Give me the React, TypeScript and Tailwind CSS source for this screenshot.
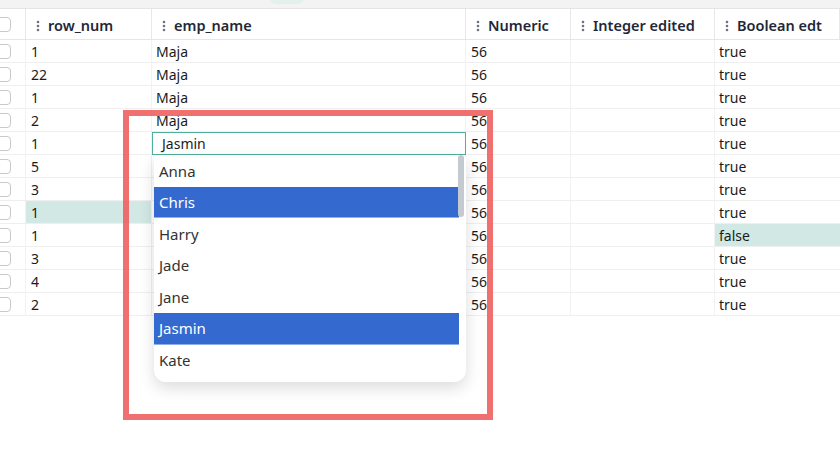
import React from "react";

type Row = { num: string; name: string; numeric: string; bool: string };

const rows: Row[] = [
  { num: "1", name: "Maja", numeric: "56", bool: "true" },
  { num: "22", name: "Maja", numeric: "56", bool: "true" },
  { num: "1", name: "Maja", numeric: "56", bool: "true" },
  { num: "2", name: "Maja", numeric: "56", bool: "true" },
  { num: "1", name: "Jasmin", numeric: "56", bool: "true" },
  { num: "5", name: "", numeric: "56", bool: "true" },
  { num: "3", name: "", numeric: "56", bool: "true" },
  { num: "1", name: "", numeric: "56", bool: "true" },
  { num: "1", name: "", numeric: "56", bool: "false" },
  { num: "3", name: "", numeric: "56", bool: "true" },
  { num: "4", name: "", numeric: "56", bool: "true" },
  { num: "2", name: "", numeric: "56", bool: "true" },
];

const options = ["Anna", "Chris", "Harry", "Jade", "Jane", "Jasmin", "Kate"];
const selected = ["Chris", "Jasmin"];

const cols = "grid grid-cols-[26px_126px_314px_105px_144px_1fr]";

const Dots = () => (
  <svg width="4" height="12" viewBox="0 0 4 12" className="shrink-0">
    <circle cx="2" cy="2" r="1.3" fill="#6b7280" />
    <circle cx="2" cy="6" r="1.3" fill="#6b7280" />
    <circle cx="2" cy="10" r="1.3" fill="#6b7280" />
  </svg>
);

const Check = () => (
  <div className="-ml-[4px] w-[15px] h-[15px] rounded-[4px] border border-[#c9c9c9] bg-white" />
);

const HeaderCell = ({ label }: { label: string }) => (
  <div className="flex items-center gap-[8px] pl-[10px] pt-[4px] border-r border-[#e8e8e8]">
    <Dots />
    <span>{label}</span>
  </div>
);

export default function App() {
  return (
    <div
      className="relative w-[840px] h-[467px] overflow-hidden bg-white text-[14px] text-[#1b1b1b]"
      style={{ fontFamily: "'Noto Sans', 'Open Sans', sans-serif" }}
    >
      {/* toolbar strip above the grid */}
      <div className="relative h-[9px] bg-[#f3f3f3] border-b border-[#e4e4e4]">
        <div className="absolute left-[270px] -top-[8px] w-[34px] h-[12px] rounded-full bg-[#e2f1ec]" />
      </div>

      {/* header */}
      <div className={`${cols} h-[31px] border-b border-[#e6e6e6] text-[14.5px] font-semibold text-[#1e2838]`}>
        <div className="flex items-center border-r border-[#e8e8e8] overflow-hidden">
          <Check />
        </div>
        <HeaderCell label="row_num" />
        <HeaderCell label="emp_name" />
        <HeaderCell label="Numeric" />
        <HeaderCell label="Integer edited" />
        <HeaderCell label="Boolean edt" />
      </div>

      {/* body */}
      <div>
        {rows.map((r, i) => (
          <div key={i} className={`${cols} h-[23px] border-b border-[#efefef]`}>
            <div className="flex items-center border-r border-[#f2f2f2] overflow-hidden">
              <Check />
            </div>
            <div
              className={`flex items-center pl-[5px] border-r border-[#f2f2f2] ${
                i === 7 ? "bg-[#d2e8e5]" : ""
              }`}
            >
              {r.num}
            </div>
            {i === 4 ? (
              <div className="flex items-center pl-[9px] border border-[#52ae9c]">{r.name}</div>
            ) : (
              <div className="flex items-center pl-[4px] border-r border-[#f2f2f2]">{r.name}</div>
            )}
            <div className="flex items-center pl-[5px] border-r border-[#f2f2f2]">{r.numeric}</div>
            <div className="border-r border-[#f2f2f2]" />
            <div className={`flex items-center pl-[4px] ${i === 8 ? "bg-[#d2e8e5]" : ""}`}>
              {r.bool}
            </div>
          </div>
        ))}
      </div>

      {/* name picker opened under the edited cell */}
      <div className="absolute left-[154px] top-[155px] w-[312px] h-[227px] bg-white rounded-b-[12px] rounded-t-[4px] shadow-[0_6px_16px_rgba(0,0,0,0.14)] overflow-hidden text-[15px] text-[#333]">
        <div className="pr-[7px]">
          {options.map((o) => {
            const on = selected.includes(o);
            return (
              <div
                key={o}
                className={`h-[31.6px] flex items-center pl-[5px] ${
                  on ? "bg-[#346acf] text-white border-b border-[#8fb0e6]" : ""
                }`}
              >
                {o}
              </div>
            );
          })}
        </div>
        <div className="absolute right-[2px] top-[0px] w-[6px] h-[62px] rounded-full bg-[#c5c9d0]" />
      </div>

      {/* highlight frame */}
      <div className="absolute left-[123px] top-[110px] w-[370px] h-[310px] border-[6px] border-[#ee5f5f]/90" />
    </div>
  );
}
